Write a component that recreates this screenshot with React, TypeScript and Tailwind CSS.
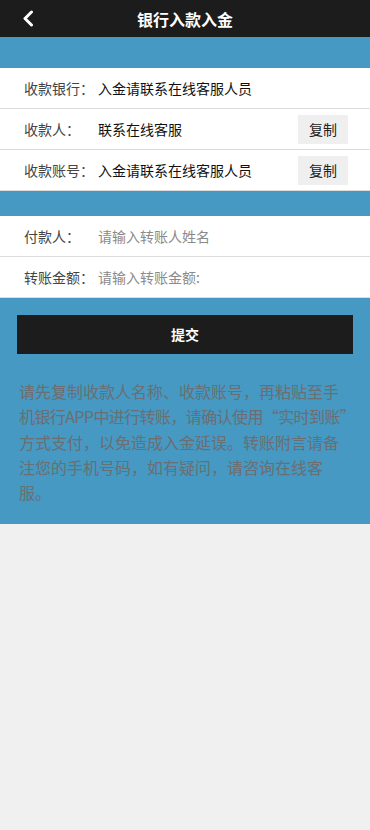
import React from "react";

const font = { fontFamily: '"Noto Sans CJK SC", "Noto Sans", sans-serif' };

function Row({
  label,
  children,
  copy,
}: {
  label: string;
  children: React.ReactNode;
  copy?: boolean;
}) {
  return (
    <div className="flex h-[41px] items-center border-b border-[#dcdcdc] bg-white pl-[24px] pr-[22px]">
      <div className="w-[74px] shrink-0 text-[14px] text-[#444]">{label}</div>
      <div className="flex-1 text-[14px]">{children}</div>
      {copy && (
        <div className="flex h-[29px] w-[50px] items-center justify-center bg-[#efefef] text-[14px] text-[#222]">
          复制
        </div>
      )}
    </div>
  );
}

export default function App() {
  return (
    <div className="min-h-[830px] w-full bg-[#f0f0f0]" style={font}>
      <div className="relative flex h-[37px] items-center justify-center bg-[#1c1c1c]">
        <svg
          className="absolute left-[21px] top-[10px]"
          width="14"
          height="17"
          viewBox="0 0 14 17"
          fill="none"
        >
          <path
            d="M10.5 2 L4 8.5 L10.5 15"
            stroke="white"
            strokeWidth="3"
            strokeLinecap="round"
            strokeLinejoin="round"
          />
        </svg>
        <div className="text-[16px] font-bold text-white">银行入款入金</div>
      </div>
      <div className="h-[31px] bg-[#4599c3]" />
      <Row label="收款银行：">
        <span className="text-[#111]">入金请联系在线客服人员</span>
      </Row>
      <Row label="收款人：" copy>
        <span className="text-[#111]">联系在线客服</span>
      </Row>
      <Row label="收款账号：" copy>
        <span className="text-[#111]">入金请联系在线客服人员</span>
      </Row>
      <div className="h-[25px] bg-[#4599c3]" />
      <Row label="付款人：">
        <span className="text-[#8a8a8a]">请输入转账人姓名</span>
      </Row>
      <Row label="转账金额：">
        <span className="text-[#8a8a8a]">请输入转账金额:</span>
      </Row>
      <div className="bg-[#4599c3] px-[17px] pb-[19px] pt-[17px]">
        <div className="flex h-[39px] items-center justify-center bg-[#1c1c1c] text-[14px] font-bold text-white">
          提交
        </div>
        <div className="mt-[25px] px-[2px] text-[16px] leading-[25.3px] text-[#6b6e72]">
          <div className="whitespace-nowrap">请先复制收款人名称、收款账号，再粘贴至手</div>
          <div className="whitespace-nowrap tracking-[-0.6px]">机银行APP中进行转账，请确认使用“实时到账”</div>
          <div className="whitespace-nowrap">方式支付，以免造成入金延误。转账附言请备</div>
          <div className="whitespace-nowrap">注您的手机号码，如有疑问，请咨询在线客</div>
          <div className="whitespace-nowrap">服。</div>
        </div>
      </div>
    </div>
  );
}
